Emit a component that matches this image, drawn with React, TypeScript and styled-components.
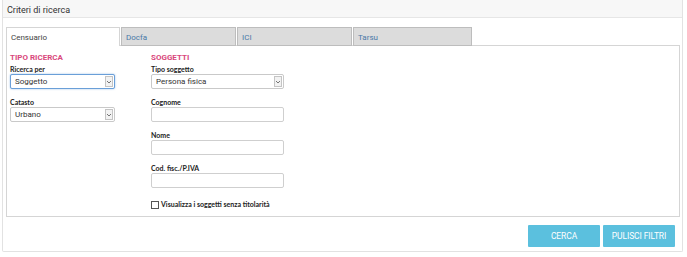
import React from "react";
import styled, { createGlobalStyle } from "styled-components";

const Global = createGlobalStyle`
  html, body { margin: 0; padding: 0; background: #fff; }
  body { font-family: Roboto, "Liberation Sans", sans-serif; color: #333; }
  * { box-sizing: border-box; }
`;

const Page = styled.div`
  width: 687px;
  height: 257px;
  padding: 0 4px 5px 2px;
`;

const Panel = styled.div`
  border: 1px solid #e2e2e2;
  border-top: none;
  border-radius: 0 0 2px 2px;
  height: 252px;
  display: flex;
  flex-direction: column;
`;

const Header = styled.div`
  height: 18px;
  background: #f7f7f7;
  border-bottom: 1px solid #e6e6e6;
  padding: 5px 0 0 4px;
  font-size: 9px;
  color: #333;
  line-height: 10px;
`;

const Body = styled.div`
  flex: 1;
  padding: 9px 2px 0 3px;
  display: flex;
  flex-direction: column;
`;

const TabBar = styled.div`
  display: flex;
  height: 18px;
`;

const Tab = styled.div<{ $active?: boolean; $w: number }>`
  width: ${(p) => p.$w}px;
  height: 19px;
  margin-right: 1px;
  border: 1px solid ${(p) => (p.$active ? "#d5d5d5" : "#bdbdbd")};
  border-bottom: ${(p) => (p.$active ? "none" : "1px solid #bdbdbd")};
  background: ${(p) => (p.$active ? "#fff" : "#dcdcdc")};
  color: ${(p) => (p.$active ? "#444" : "#4a79a8")};
  font-size: 8px;
  padding: 5px 0 0 4px;
  line-height: 9px;
  position: relative;
  z-index: ${(p) => (p.$active ? 1 : 0)};
`;

const TabContent = styled.div`
  height: 172px;
  border: 1px solid #d5d5d5;
  display: flex;
  padding: 7px 0 0 3px;
`;

const Col = styled.div<{ $w: number }>`
  width: ${(p) => p.$w}px;
  display: flex;
  flex-direction: column;
`;

const SectionTitle = styled.div`
  color: #d9487c;
  font-weight: 700;
  font-size: 8px;
  line-height: 9px;
  margin-bottom: 3px;
`;

const Label = styled.div`
  font-family: Lato, Roboto, sans-serif;
  font-weight: 700;
  font-size: 7px;
  line-height: 8px;
  color: #222;
  margin-bottom: 1px;
`;

const Field = styled.div<{ $gap?: number }>`
  margin-bottom: ${(p) => p.$gap ?? 9}px;
`;

const SelectWrap = styled.div<{ $w: number }>`
  position: relative;
  width: ${(p) => p.$w}px;
`;

const Select = styled.select<{ $focus?: boolean }>`
  appearance: none;
  -webkit-appearance: none;
  display: block;
  width: 100%;
  height: 15px;
  border: 1px solid ${(p) => (p.$focus ? "#6a9fd8" : "#c9c9c9")};
  border-radius: 2px;
  box-shadow: ${(p) => (p.$focus ? "0 0 2px rgba(80,140,210,0.6)" : "none")};
  background: #fff;
  font-family: Roboto, "Liberation Sans", sans-serif;
  font-size: 8px;
  color: #333;
  padding: 0 0 0 4px;
  margin: 0;
  outline: none;
`;

const Arrow = styled.span`
  position: absolute;
  right: 2px;
  top: 2px;
  width: 8px;
  height: 11px;
  border: 1px solid #c4c4c4;
  background: #f2f2f2;
  display: flex;
  align-items: center;
  justify-content: center;
  pointer-events: none;
`;

const Input = styled.input<{ $w: number }>`
  width: ${(p) => p.$w}px;
  height: 15px;
  border: 1px solid #cfcfcf;
  border-radius: 2px;
  outline: none;
  display: block;
  margin: 0;
`;

const CheckRow = styled.label`
  display: flex;
  align-items: center;
  gap: 2px;
  margin-top: 3px;
  font-family: Lato, Roboto, sans-serif;
  font-weight: 700;
  font-size: 7px;
  line-height: 9px;
  color: #222;
`;

const Box = styled.span`
  width: 8px;
  height: 8px;
  border: 1px solid #555;
  background: #fff;
  display: inline-block;
`;

const Footer = styled.div`
  display: flex;
  justify-content: flex-end;
  gap: 3px;
  padding: 8px 5px 0 0;
`;

const Button = styled.button`
  width: 72px;
  height: 22px;
  border: none;
  border-radius: 1px;
  background: #5bc0de;
  color: #fff;
  font-family: Roboto, "Liberation Sans", sans-serif;
  font-size: 8.5px;
  padding: 0;
  letter-spacing: -0.1px;
`;

const Chevron = () => (
  <svg width="6" height="6" viewBox="0 0 6 6">
    <path d="M1 2 L3 4 L5 2" fill="none" stroke="#666" strokeWidth="0.9" />
  </svg>
);

const SelectBox: React.FC<{ w: number; value: string; focus?: boolean }> = ({ w, value, focus }) => (
  <SelectWrap $w={w}>
    <Select $focus={focus} defaultValue={value}>
      <option>{value}</option>
    </Select>
    <Arrow>
      <Chevron />
    </Arrow>
  </SelectWrap>
);

export default function App() {
  return (
    <Page>
      <Global />
      <Panel>
        <Header>Criteri di ricerca</Header>
        <Body>
          <TabBar>
            <Tab $active $w={114}>Censuario</Tab>
            <Tab $w={115}>Docfa</Tab>
            <Tab $w={115}>ICI</Tab>
            <Tab $w={119}>Tarsu</Tab>
          </TabBar>
          <TabContent>
            <Col $w={141}>
              <SectionTitle>TIPO RICERCA</SectionTitle>
              <Field>
                <Label>Ricerca per</Label>
                <SelectBox w={105} value="Soggetto" focus />
              </Field>
              <Field>
                <Label>Catasto</Label>
                <SelectBox w={105} value="Urbano" />
              </Field>
            </Col>
            <Col $w={140}>
              <SectionTitle>SOGGETTI</SectionTitle>
              <Field>
                <Label>Tipo soggetto</Label>
                <SelectBox w={133} value="Persona fisica" />
              </Field>
              <Field>
                <Label>Cognome</Label>
                <Input $w={133} />
              </Field>
              <Field>
                <Label>Nome</Label>
                <Input $w={133} />
              </Field>
              <Field>
                <Label>Cod. fisc./P.IVA</Label>
                <Input $w={133} />
              </Field>
              <CheckRow>
                <Box />
                Visualizza i soggetti senza titolarità
              </CheckRow>
            </Col>
          </TabContent>
          <Footer>
            <Button>CERCA</Button>
            <Button>PULISCI FILTRI</Button>
          </Footer>
        </Body>
      </Panel>
    </Page>
  );
}
